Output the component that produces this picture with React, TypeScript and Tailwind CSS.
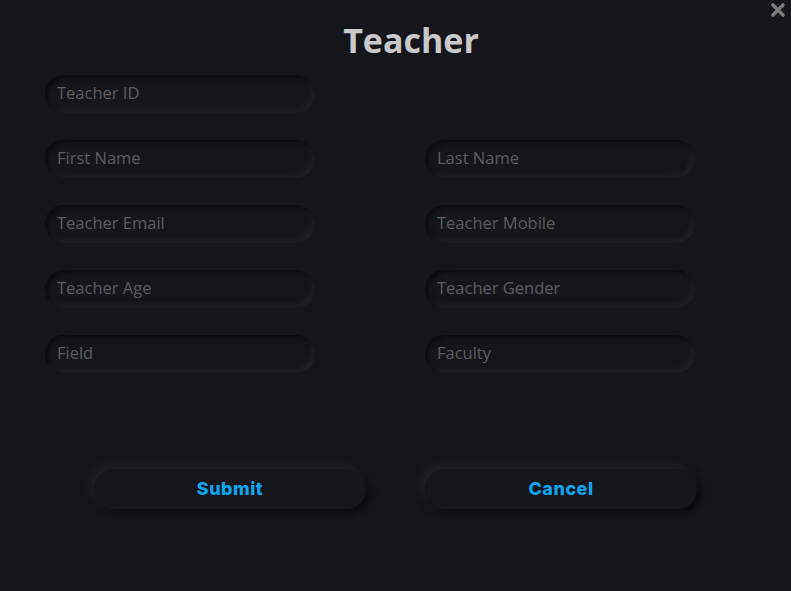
import React from "react";

const Field = ({ ph }: { ph: string }) => (
  <input
    placeholder={ph}
    className="w-[270px] h-[38px] rounded-[19px] bg-[#15161b] pl-3 pb-[3px] text-[16.5px] text-[#aaa] placeholder:text-[#5d5d5f] outline-none shadow-[inset_3px_3px_5px_#0b0c0f,inset_-3px_-3px_5px_#1f2026]"
    style={{ fontFamily: '"Open Sans", sans-serif' }}
  />
);

export default function App() {
  return (
    <div className="w-[791px] h-[591px] bg-[#15161b] relative overflow-hidden" style={{ fontFamily: '"Open Sans", sans-serif' }}>
      <svg className="absolute left-[771px] top-[3px]" width="14" height="14" viewBox="0 0 14 14">
        <path d="M2 2 L12 12 M12 2 L2 12" stroke="#7a7a7c" strokeWidth="3.6" strokeLinecap="round" />
      </svg>
      <h1 className="text-center text-[34px] font-bold text-[#c9c9c9] pt-[16px] leading-[48px] pl-[31px]">Teacher</h1>
      <div className="pl-[45px] pt-[11px] grid grid-cols-[270px_270px] gap-x-[110px] gap-y-[27px]">
        <Field ph="Teacher ID" />
        <div />
        <Field ph="First Name" />
        <Field ph="Last Name" />
        <Field ph="Teacher Email" />
        <Field ph="Teacher Mobile" />
        <Field ph="Teacher Age" />
        <Field ph="Teacher Gender" />
        <Field ph="Field" />
        <Field ph="Faculty" />
      </div>
      <div className="flex pl-[94px] pt-[96px] gap-[59px]">
        <button className="w-[272px] h-[40px] rounded-[20px] bg-[#15161b] text-[#0ea5ef] text-[18px] font-extrabold tracking-[0.5px] pb-[2px] shadow-[-4px_-4px_8px_#1f2026,4px_4px_8px_#0a0b0e]" style={{ fontFamily: 'Inter, sans-serif' }}>Submit</button>
        <button className="w-[272px] h-[40px] rounded-[20px] bg-[#15161b] text-[#0ea5ef] text-[18px] font-extrabold tracking-[0.5px] pb-[2px] shadow-[-4px_-4px_8px_#1f2026,4px_4px_8px_#0a0b0e]" style={{ fontFamily: 'Inter, sans-serif' }}>Cancel</button>
      </div>
    </div>
  );
}
